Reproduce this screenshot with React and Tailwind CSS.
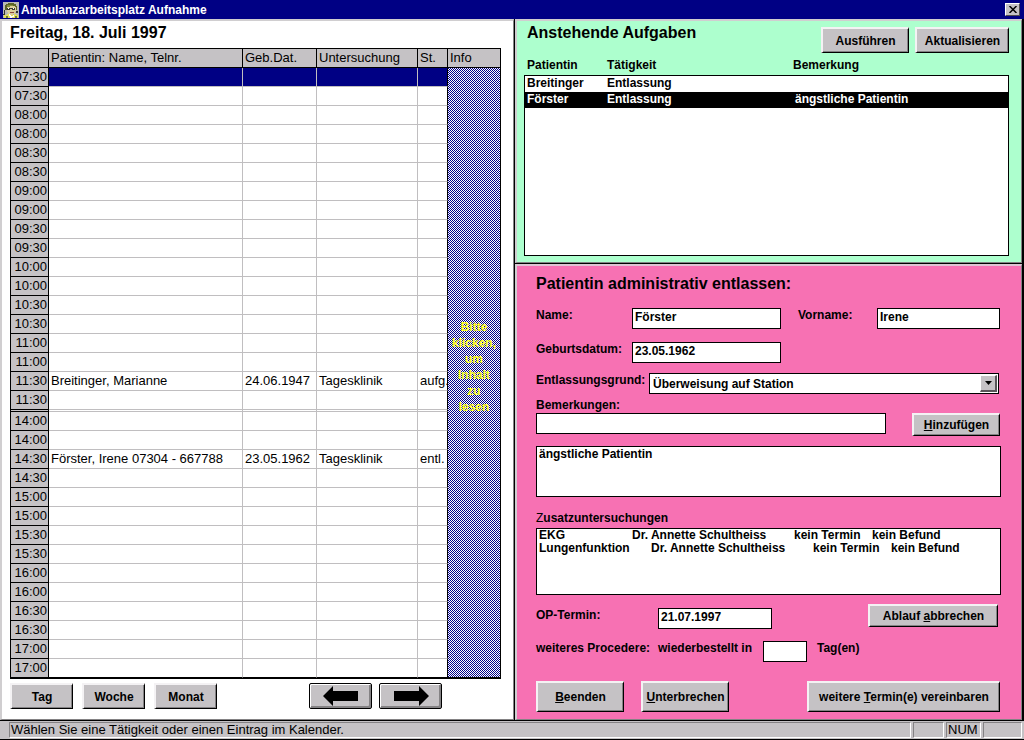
import React from "react";

const bookings = {
  16: ["Breitinger, Marianne", "24.06.1947", "Tagesklinik", "aufg."],
  20: ["Förster, Irene 07304 - 667788", "23.05.1962", "Tagesklinik", "entl."],
};

const times = [
  "07:30", "08:00", "08:30", "09:00", "09:30", "10:00", "10:30", "11:00", "11:30",
  "14:00", "14:30", "15:00", "15:30", "16:00", "16:30", "17:00",
].flatMap((t) => [t, t]);

// 07:30 to 11:30 is the morning block, everything after it the afternoon block
const MORNING_ROWS = 18;

const tasks = [
  { patient: "Breitinger", action: "Entlassung", note: "", selected: false },
  { patient: "Förster", action: "Entlassung", note: "ängstliche Patientin", selected: true },
];

function Button({ className = "", children, ...rest }) {
  return (
    <button
      type="button"
      className={`flex shrink-0 items-center justify-center whitespace-nowrap border-t-2 border-l-2 border-r border-b border-t-[#f4f2f4] border-l-[#f4f2f4] border-r-black border-b-black bg-[#c5c2c5] text-black shadow-[inset_-1px_-1px_0_#848284] ${className}`}
      {...rest}
    >
      <span>{children}</span>
    </button>
  );
}

function ArrowButton({ label, d }) {
  return (
    <button
      type="button"
      aria-label={label}
      className="flex h-[26px] w-[63px] items-center justify-center rounded-[2px] border border-black bg-[#c5c2c5] shadow-[inset_1px_1px_0_#fff,inset_-2px_-2px_0_#848284]"
    >
      <svg width="36" height="20" viewBox="0 0 36 20" aria-hidden="true">
        <path d={d} fill="#000" />
      </svg>
    </button>
  );
}

function Field({ id, className = "", ...rest }) {
  return (
    <input
      id={id}
      type="text"
      className={`h-[21px] shrink-0 rounded-none border border-black bg-white px-[2px] pb-1 leading-4 text-black outline-none ${className}`}
      {...rest}
    />
  );
}

function AppIcon() {
  return (
    <svg width="16" height="16" viewBox="0 0 16 16" shapeRendering="crispEdges" aria-hidden="true">
      <rect width="16" height="16" fill="#b9b9b4" />
      <path d="M3 2h2V1h6v1h2v2h1v4h-1V5H4v3H2V3h1z" fill="#5c6426" />
      <path d="M4 4h8v1h1v5h-1v2h-2v1H7v-1H5v-2H4z" fill="#dccf9b" />
      <path d="M4 3h6v1H7v1H4z" fill="#828c3c" />
      <path d="M4 6h3v2H4zM9 6h3v2H9zM7 6h2v1H7z" fill="#3a3a30" />
      <path d="M5 6h1v1H5zM10 6h1v1h-1z" fill="#fff" />
      <path d="M7 10h4v1H7z" fill="#8c4a3a" />
      <path d="M1 13h3v-1h2v1h5v-1h2v1h2v3H1z" fill="#e6e05a" />
      <path d="M6 12h1v1h1v1h2v-1h1v2H9v1H7v-2H6z" fill="#fff" />
      <path d="M1 8h1v4H1zM0 12h2v1H0zM13 9h2v2h-2z" fill="#35352c" />
      <path d="M3 14h2v2H3zM12 14h2v2h-2z" fill="#6e7a30" />
    </svg>
  );
}

function Calendar() {
  const line = "border-r border-b border-[#c0bec0] p-0 pl-[2px] whitespace-nowrap overflow-hidden";
  const head = "border-t border-r border-b border-black bg-[#c5c2c5] p-0 pl-[2px] text-left font-normal";
  const renderRow = (time, i) => {
    const booking = bookings[i] || ["", "", "", ""];
    const selected = i === 0;
    const last = i === times.length - 1;
    return (
      <tr key={i} className={`h-[19px] ${selected ? "bg-[#000084] text-white" : ""}`}>
        <th
          scope="row"
          className="border-x border-b border-black bg-[#c5c2c5] p-0 pr-px text-right font-normal text-black"
        >
          {time}
        </th>
        {booking.map((text, c) => (
          <td
            key={c}
            className={`${line} ${last ? "border-b-black" : ""} ${c === 3 ? "border-r-black" : ""}`}
          >
            {text}
          </td>
        ))}
        {i === 0 && (
          <td
            rowSpan={times.length + 1}
            className="border-r border-b border-black bg-[repeating-conic-gradient(#ffffff_0_25%,#00008c_0_50%)] bg-size-[2px_2px] p-0 pb-[10px] text-center align-middle"
          >
            <button type="button" className="w-full text-xs leading-4 font-bold text-[#ffff20]">
              Bitte<br />klicken,<br />um<br />Inhalt<br />zu<br />lesen
            </button>
          </td>
        )}
      </tr>
    );
  };
  return (
    <table className="w-full table-fixed border-separate border-spacing-0 border-b border-black text-[13px] leading-[18px]">
      <colgroup>
        <col className="w-[39px]" />
        <col />
        <col className="w-[74px]" />
        <col className="w-[101px]" />
        <col className="w-[30px]" />
        <col className="w-[53px]" />
      </colgroup>
      <thead>
        <tr className="h-5">
          <th className={`${head} border-l`} aria-label="Uhrzeit" />
          <th className={head}>Patientin: Name, Telnr.</th>
          <th className={head}>Geb.Dat.</th>
          <th className={head}>Untersuchung</th>
          <th className={head}>St.</th>
          <th className={head}>Info</th>
        </tr>
      </thead>
      <tbody>
        {times.slice(0, MORNING_ROWS).map((t, i) => renderRow(t, i))}
        <tr className="h-[2px]" aria-hidden="true">
          <td className="border-x border-b border-black bg-[#c5c2c5] p-0" />
          <td className={line} />
          <td className={line} />
          <td className={line} />
          <td className={`${line} border-r-black`} />
        </tr>
        {times.slice(MORNING_ROWS).map((t, i) => renderRow(t, i + MORNING_ROWS))}
      </tbody>
    </table>
  );
}

function CalendarPanel() {
  return (
    <section className="border-t-2 border-r border-b border-l-2 border-t-[#d0ced0] border-r-[#848284] border-b-[#848284] border-l-[#d0ced0] bg-white pr-3 pl-2">
      <h1 className="mb-[3px] h-6 text-base leading-6 font-bold">Freitag, 18. Juli 1997</h1>
      <Calendar />
      <div className="mt-1 flex justify-between pr-[59px]">
        <div className="flex gap-[9px] text-xs font-bold">
          <Button className="h-[26px] w-[63px]">Tag</Button>
          <Button className="h-[26px] w-[63px]">Woche</Button>
          <Button className="h-[26px] w-[63px]">Monat</Button>
        </div>
        <div className="flex gap-[7px]">
          <ArrowButton label="Zurück" d="M0 10 10 0V5H35V15H10V20Z" />
          <ArrowButton label="Vor" d="M36 10 26 0V5H1V15H26V20Z" />
        </div>
      </div>
    </section>
  );
}

function TaskPanel() {
  return (
    <section className="border-t-2 border-r border-b border-l-2 border-t-[#d0ced0] border-r-[#848284] border-b-[#848284] border-l-[#d0ced0] bg-[#adffce] pr-3 pb-[6px] pl-[7px]">
      <div className="flex justify-between">
        <h2 className="pl-[3px] text-base leading-6 font-bold">Anstehende Aufgaben</h2>
        <div className="flex gap-[6px] pt-[6px]">
          <Button className="h-[26px] w-[88px]">Ausführen</Button>
          <Button className="h-[26px] w-[94px]">Aktualisieren</Button>
        </div>
      </div>
      <table className="mt-1 w-full table-fixed border-separate border-spacing-0 text-left leading-[14px]">
        <colgroup>
          <col className="w-[83px]" />
          <col className="w-[186px]" />
          <col />
        </colgroup>
        <thead>
          <tr className="h-[18px] align-top leading-4">
            <th className="p-0 pl-[3px]">Patientin</th>
            <th className="p-0">Tätigkeit</th>
            <th className="p-0">Bemerkung</th>
          </tr>
        </thead>
        <tbody>
          {tasks.map((t, i) => (
            <tr key={t.patient} className={`align-top ${i === 0 ? "h-[17px]" : "h-4"} ${t.selected ? "bg-black text-white" : "bg-white"}`}>
              <td className={`border-l border-black p-0 pl-[2px] ${i === 0 ? "border-t" : ""}`}>{t.patient}</td>
              <td className={`border-black p-0 ${i === 0 ? "border-t" : ""}`}>{t.action}</td>
              <td className={`border-r border-black p-0 pl-[2px] ${i === 0 ? "border-t" : ""}`}>{t.note}</td>
            </tr>
          ))}
          <tr className="h-[148px] bg-white">
            <td colSpan={3} className="border-x border-b border-black p-0" />
          </tr>
        </tbody>
      </table>
    </section>
  );
}

function ListLine({ name, nameClass }) {
  return (
    <li className="flex whitespace-nowrap">
      <span className={nameClass}>{name}</span>
      <span className="w-[162px]">Dr. Annette Schultheiss</span>
      <span className="w-[78px]">kein Termin</span>
      <span>kein Befund</span>
    </li>
  );
}

function DischargePanel() {
  return (
    <section className="flex-1 border-t-2 border-r border-b border-l-2 border-t-[#e0c4d4] border-r-[#848284] border-b-[#848284] border-l-[#d0ced0] bg-[#f771b3] pr-5 pb-[7px] pl-[19px]">
      <form onSubmit={(e) => e.preventDefault()}>
        <h2 className="pt-[6px] text-base leading-6 font-bold">Patientin administrativ entlassen:</h2>

        <div className="mt-3 flex items-start">
          <label htmlFor="name" className="w-24 leading-[14px]">Name:</label>
          <Field id="name" className="w-[149px]" defaultValue="Förster" />
          <label htmlFor="vorname" className="ml-auto w-[79px] leading-[14px]">Vorname:</label>
          <Field id="vorname" className="mr-px w-[123px]" defaultValue="Irene" />
        </div>

        <div className="mt-[13px] flex items-start">
          <label htmlFor="geb" className="w-24 leading-[14px]">Geburtsdatum:</label>
          <Field id="geb" className="w-[149px]" defaultValue="23.05.1962" />
        </div>

        <div className="mt-[10px] flex items-start">
          <label htmlFor="grund" className="w-[113px] leading-[14px]">Entlassungsgrund:</label>
          <div className="relative mr-[2px] flex-1">
            <select
              id="grund"
              className="block h-[21px] w-full appearance-none rounded-none border border-black bg-white pl-[3px] leading-4 text-black outline-none"
            >
              <option>Überweisung auf Station</option>
            </select>
            <span className="pointer-events-none absolute top-[2px] right-[2px] flex size-[17px] items-center justify-center border-t border-r-2 border-b-2 border-l border-t-white border-r-[#585458] border-b-[#585458] border-l-white bg-[#c5c2c5]">
              <svg width="7" height="4" viewBox="0 0 7 4" aria-hidden="true">
                <path d="M0 0H7L3.5 4Z" fill="#000" />
              </svg>
            </span>
          </div>
        </div>

        <div className="mt-[3px] flex items-end justify-between">
          <div>
            <label htmlFor="bem" className="block leading-4">Bemerkungen:</label>
            <Field id="bem" className="block w-[350px]" />
          </div>
          <Button className="-mb-[2px] mr-px h-[23px] w-[88px]"><u>H</u>inzufügen</Button>
        </div>

        <textarea
          aria-label="Erfasste Bemerkungen"
          className="mt-3 block h-[51px] w-full resize-none rounded-none border border-black bg-white px-[2px] leading-[14px] text-black outline-none"
          defaultValue="ängstliche Patientin"
        />

        <h3 className="mt-[13px] h-[18px] leading-4"><span className="font-normal">Z</span>usatzuntersuchungen</h3>
        <ul className="h-[67px] border border-black bg-white px-[2px] leading-[13px]">
          <ListLine name="EKG" nameClass="w-[93px]" />
          <ListLine name="Lungenfunktion" nameClass="w-[112px]" />
        </ul>

        <div className="mt-[9px] flex items-start">
          <label htmlFor="op" className="w-[122px] pt-1 leading-[14px]">OP-Termin:</label>
          <div className="pt-1">
            <Field id="op" className="block w-[114px]" defaultValue="21.07.1997" />
          </div>
          <Button className="mr-[3px] ml-auto h-[23px] w-[130px]">Ablauf <u>a</u>bbrechen</Button>
        </div>

        <div className="mt-3 flex items-start leading-[14px]">
          <span className="w-[122px] whitespace-nowrap">weiteres Procedere:</span>
          <label htmlFor="tage" className="w-[105px]">wiederbestellt in</label>
          <Field id="tage" className="w-[44px]" />
          <span className="pl-[10px]">Tag(en)</span>
        </div>

        <div className="mt-[19px] flex">
          <Button className="h-[31px] w-[88px]"><u>B</u>eenden</Button>
          <Button className="ml-[17px] h-[31px] w-[88px]"><u>U</u>nterbrechen</Button>
          <Button className="mr-px ml-auto h-[31px] w-[193px]">weitere <u>T</u>ermin(e) vereinbaren</Button>
        </div>
      </form>
    </section>
  );
}

function StatusBar() {
  const pane = "border border-t-[#848284] border-l-[#848284] border-r-white border-b-white";
  return (
    <footer className="flex h-[18px] gap-[2px] bg-[#c5c2c5] py-px pr-[2px] pl-[9px] text-[13px] leading-[14px]">
      <div className={`flex-1 pl-px ${pane}`}>Wählen Sie eine Tätigkeit oder einen Eintrag im Kalender.</div>
      <div className={`w-[31px] ${pane}`} />
      <div className={`w-[35px] pl-px ${pane}`}>NUM</div>
      <div className={`w-[39px] ${pane}`} />
    </footer>
  );
}

export default function App() {
  return (
    <div className="flex min-h-screen flex-col bg-black font-['Liberation_Sans',Arial,sans-serif] text-black">
      <header className="flex h-[19px] items-center gap-[2px] bg-[#000084] pr-1 pl-[3px] text-xs font-bold text-white">
        <AppIcon />
        <span className="flex-1">Ambulanzarbeitsplatz Aufnahme</span>
        <button
          type="button"
          aria-label="Schließen"
          className="flex h-[13px] w-[15px] items-center justify-center border border-t-white border-r-[#504c50] border-b-[#504c50] border-l-white bg-[#c5c2c5]"
        >
          <svg width="8" height="7" viewBox="0 0 8 7" aria-hidden="true">
            <path d="M0.5 0 7.5 7M7.5 0 0.5 7" stroke="#000" strokeWidth="1.5" />
          </svg>
        </button>
      </header>
      <main className="grid flex-1 grid-cols-[514fr_507fr] gap-px pr-[2px]">
        <CalendarPanel />
        <div className="flex flex-col gap-px text-xs font-bold">
          <TaskPanel />
          <DischargePanel />
        </div>
      </main>
      <div className="py-px">
        <StatusBar />
      </div>
    </div>
  );
}
